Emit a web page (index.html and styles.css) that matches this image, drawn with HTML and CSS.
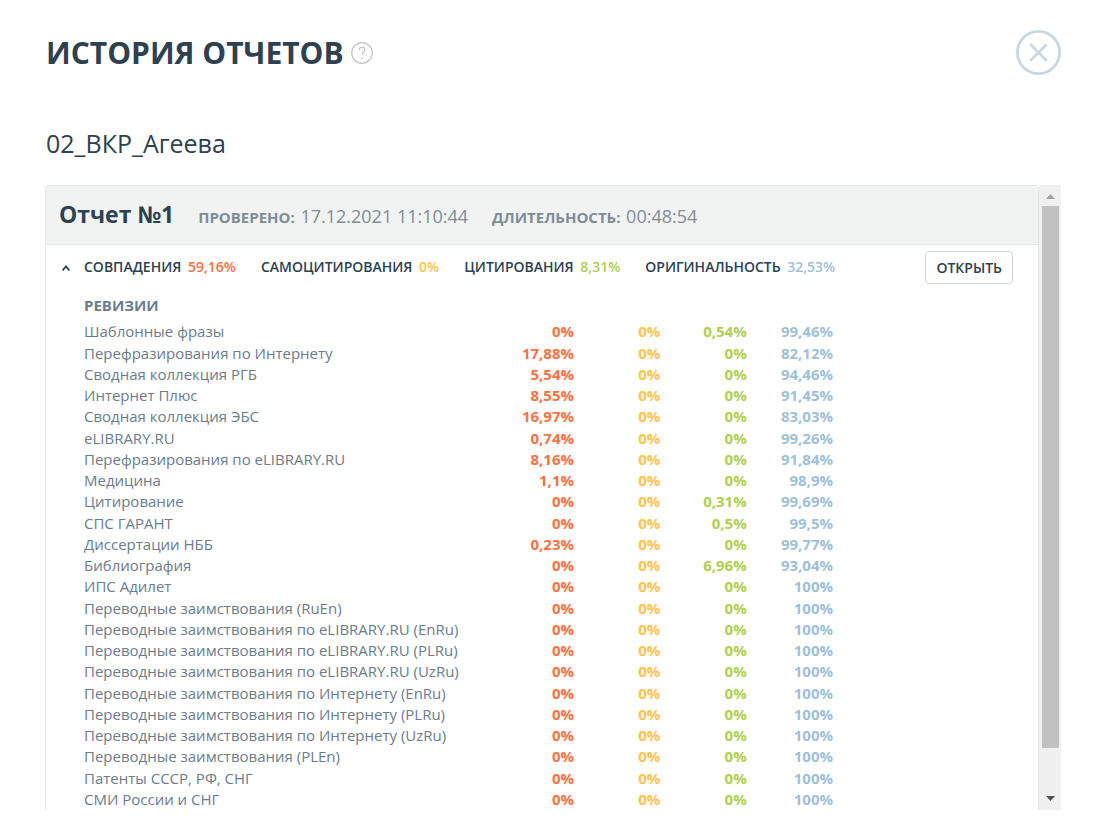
FILE: index.html
```
<!DOCTYPE html>
<html lang="ru">
<head>
<meta charset="utf-8">
<title>История отчетов</title>
<link rel="stylesheet" href="styles.css">
</head>
<body>
<main class="page">
  <header class="page-header">
    <h1 class="title">ИСТОРИЯ ОТЧЕТОВ</h1>
    <button class="help" type="button" aria-label="Справка">
      <svg width="22" height="22" viewBox="0 0 22 22" fill="none" stroke="#c4c4c4"><circle cx="11" cy="11" r="10.3" stroke-width="1.2"/><path d="M8.2 8.1C8.2 6.2 9.4 5.2 11 5.2s2.8 1.1 2.8 2.7c0 2.3-2.8 2.5-2.8 5.3" stroke-width="1.2"/><circle cx="11" cy="16.3" r=".9" fill="#c4c4c4" stroke="none"/></svg>
    </button>
    <button class="close" type="button" aria-label="Закрыть">
      <svg width="45" height="46" viewBox="0 0 45 46" fill="none" stroke="#c8d7e2"><circle cx="22.500" cy="22.500" r="21.1" stroke-width="2.8"/><path d="M15 15l15 15m0-15l-15 15" stroke-width="2.6" stroke-linecap="round"/></svg>
    </button>
  </header>
  <h2 class="document">02_ВКР_Агеева</h2>
  <div class="scroller">
    <section class="report">
      <header class="report-header">
        <h3 class="report-name">Отчет №1</h3>
        <div class="meta"><b class="meta-label">ПРОВЕРЕНО:</b> 17.12.2021 11:10:44</div>
        <div class="meta"><b class="meta-label">ДЛИТЕЛЬНОСТЬ:</b> 00:48:54</div>
      </header>
      <div class="summary">
        <button class="toggle" type="button" aria-label="Свернуть" aria-expanded="true">
          <svg width="8" height="6" viewBox="0 0 8 6" fill="none" stroke="#2d4150" stroke-width="1.8"><path d="M.6 5.4L4 1.4l3.400 4"/></svg>
        </button>
        <div class="stat">СОВПАДЕНИЯ <span class="match">59,16%</span></div>
        <div class="stat">САМОЦИТИРОВАНИЯ <span class="self">0%</span></div>
        <div class="stat">ЦИТИРОВАНИЯ <span class="cite">8,31%</span></div>
        <div class="stat">ОРИГИНАЛЬНОСТЬ <span class="orig">32,53%</span></div>
        <button class="open" type="button">ОТКРЫТЬ</button>
      </div>
      <h4 class="revisions-title" id="revisions">РЕВИЗИИ</h4>
      <table class="revisions" aria-labelledby="revisions">
        <colgroup><col class="col-name"><col class="col-match"><col class="col-value"><col class="col-value"><col class="col-value"></colgroup>
        <tbody>
          <tr><th scope="row">Шаблонные фразы</th><td class="match">0%</td><td class="self">0%</td><td class="cite">0,54%</td><td class="orig">99,46%</td></tr>
          <tr><th scope="row">Перефразирования по Интернету</th><td class="match">17,88%</td><td class="self">0%</td><td class="cite">0%</td><td class="orig">82,12%</td></tr>
          <tr><th scope="row">Сводная коллекция РГБ</th><td class="match">5,54%</td><td class="self">0%</td><td class="cite">0%</td><td class="orig">94,46%</td></tr>
          <tr><th scope="row">Интернет Плюс</th><td class="match">8,55%</td><td class="self">0%</td><td class="cite">0%</td><td class="orig">91,45%</td></tr>
          <tr><th scope="row">Сводная коллекция ЭБС</th><td class="match">16,97%</td><td class="self">0%</td><td class="cite">0%</td><td class="orig">83,03%</td></tr>
          <tr><th scope="row">eLIBRARY.RU</th><td class="match">0,74%</td><td class="self">0%</td><td class="cite">0%</td><td class="orig">99,26%</td></tr>
          <tr><th scope="row">Перефразирования по eLIBRARY.RU</th><td class="match">8,16%</td><td class="self">0%</td><td class="cite">0%</td><td class="orig">91,84%</td></tr>
          <tr><th scope="row">Медицина</th><td class="match">1,1%</td><td class="self">0%</td><td class="cite">0%</td><td class="orig">98,9%</td></tr>
          <tr><th scope="row">Цитирование</th><td class="match">0%</td><td class="self">0%</td><td class="cite">0,31%</td><td class="orig">99,69%</td></tr>
          <tr><th scope="row">СПС ГАРАНТ</th><td class="match">0%</td><td class="self">0%</td><td class="cite">0,5%</td><td class="orig">99,5%</td></tr>
          <tr><th scope="row">Диссертации НББ</th><td class="match">0,23%</td><td class="self">0%</td><td class="cite">0%</td><td class="orig">99,77%</td></tr>
          <tr><th scope="row">Библиография</th><td class="match">0%</td><td class="self">0%</td><td class="cite">6,96%</td><td class="orig">93,04%</td></tr>
          <tr><th scope="row">ИПС Адилет</th><td class="match">0%</td><td class="self">0%</td><td class="cite">0%</td><td class="orig">100%</td></tr>
          <tr><th scope="row">Переводные заимствования (RuEn)</th><td class="match">0%</td><td class="self">0%</td><td class="cite">0%</td><td class="orig">100%</td></tr>
          <tr><th scope="row">Переводные заимствования по eLIBRARY.RU (EnRu)</th><td class="match">0%</td><td class="self">0%</td><td class="cite">0%</td><td class="orig">100%</td></tr>
          <tr><th scope="row">Переводные заимствования по eLIBRARY.RU (PLRu)</th><td class="match">0%</td><td class="self">0%</td><td class="cite">0%</td><td class="orig">100%</td></tr>
          <tr><th scope="row">Переводные заимствования по eLIBRARY.RU (UzRu)</th><td class="match">0%</td><td class="self">0%</td><td class="cite">0%</td><td class="orig">100%</td></tr>
          <tr><th scope="row">Переводные заимствования по Интернету (EnRu)</th><td class="match">0%</td><td class="self">0%</td><td class="cite">0%</td><td class="orig">100%</td></tr>
          <tr><th scope="row">Переводные заимствования по Интернету (PLRu)</th><td class="match">0%</td><td class="self">0%</td><td class="cite">0%</td><td class="orig">100%</td></tr>
          <tr><th scope="row">Переводные заимствования по Интернету (UzRu)</th><td class="match">0%</td><td class="self">0%</td><td class="cite">0%</td><td class="orig">100%</td></tr>
          <tr><th scope="row">Переводные заимствования (PLEn)</th><td class="match">0%</td><td class="self">0%</td><td class="cite">0%</td><td class="orig">100%</td></tr>
          <tr><th scope="row">Патенты СССР, РФ, СНГ</th><td class="match">0%</td><td class="self">0%</td><td class="cite">0%</td><td class="orig">100%</td></tr>
          <tr><th scope="row">СМИ России и СНГ</th><td class="match">0%</td><td class="self">0%</td><td class="cite">0%</td><td class="orig">100%</td></tr>
        </tbody>
      </table>
    </section>
    <div class="scrollbar" aria-hidden="true">
      <svg class="arrow" viewBox="0 0 9 5" fill="#a3a3a3"><path d="M0 5L4.500 0L9 5z"/></svg>
      <div class="track"><div class="thumb"></div></div>
      <svg class="arrow" viewBox="0 0 9 5" fill="#505050"><path d="M0 0h9L4.500 5z"/></svg>
    </div>
  </div>
</main>
</body>
</html>
```
FILE: styles.css
```
* { box-sizing: border-box; }

body {
  margin: 0;
  background: #fff;
  color: #2d4150;
  font-family: "Open Sans", "Noto Sans", sans-serif;
}

h1, h2, h3, h4 { margin: 0; }

button {
  padding: 0;
  border: 0;
  background: none;
  color: inherit;
  font: inherit;
  cursor: pointer;
}

svg { display: block; }

.page {
  display: flex;
  flex-direction: column;
  height: 100vh;
  padding: 29px 47px 17px 45px;
}

.page-header {
  display: flex;
  align-items: center;
}

.title,
.document { padding-left: 1px; }

.title {
  font-size: 30px;
  line-height: 48px;
  font-weight: 700;
}

.help { margin-left: 7px; }
.close { margin-left: auto; }

.document {
  margin: 49px 0 24px;
  font-size: 25px;
  line-height: 35px;
  font-weight: 400;
}

.scroller {
  display: flex;
  flex: 1;
  min-height: 0;
  overflow: hidden;
}

.report {
  flex: 1;
  height: max-content;
  min-height: 100%;
  padding-bottom: 20px;
  border: 1px solid #e6e8e8;
  border-radius: 3px;
}

.report-header {
  display: flex;
  align-items: baseline;
  gap: 24px;
  height: 59px;
  padding: 11px 13px 0;
  border-bottom: 1px solid #e6e8e8;
  background: #f1f3f3;
}

.report-name {
  font-size: 23px;
  line-height: 34px;
  font-weight: 700;
}

.meta {
  color: #7f8c96;
  font-size: 18px;
  font-weight: 400;
}

.meta-label {
  margin-right: 1px;
  font-size: 15px;
  font-weight: 700;
}

.summary {
  display: flex;
  align-items: center;
  gap: 25px;
  padding: 6px 25px 0 16px;
  font-size: 14px;
  line-height: 20px;
  font-weight: 600;
}

.toggle {
  width: 8px;
  margin-right: -11px;
}

.stat { padding-bottom: 2px; }

.stat span { margin-left: 3px; }

.match { color: #ff7043; }
.self { color: #ffc44d; }
.cite { color: #aed052; }
.orig { color: #a0bfd9; }

.open {
  height: 33px;
  margin-left: auto;
  padding: 0 10px;
  border: 1px solid #c8d7e2;
  border-radius: 4px;
}

.revisions-title {
  margin: 11px 0 5px 38px;
  color: #6b7c8a;
  font-size: 15px;
  line-height: 21px;
  font-weight: 700;
}

.revisions {
  width: 749px;
  margin-left: 38px;
  border-collapse: collapse;
  table-layout: fixed;
  font-size: 15px;
  line-height: 21px;
}

.col-name { width: 400px; }
.col-match { width: 90px; }

.revisions th {
  padding: 0;
  color: #6b7c8a;
  font-weight: 400;
  text-align: left;
  vertical-align: top;
  white-space: nowrap;
}

.revisions td {
  padding: 0;
  font-weight: 700;
  text-align: right;
  vertical-align: top;
}

.revisions tr:nth-child(4n + 1) { height: 22px; }

.scrollbar {
  display: flex;
  flex-direction: column;
  align-items: center;
  justify-content: space-between;
  width: 22px;
  padding: 9px 0;
  background: #f0f0f0;
}

.arrow {
  width: 9px;
  height: 5px;
}

.track {
  flex: 1;
  width: 17px;
  margin: 7px 0;
}

.thumb {
  height: 93%;
  background: #c1c1c1;
}
```
